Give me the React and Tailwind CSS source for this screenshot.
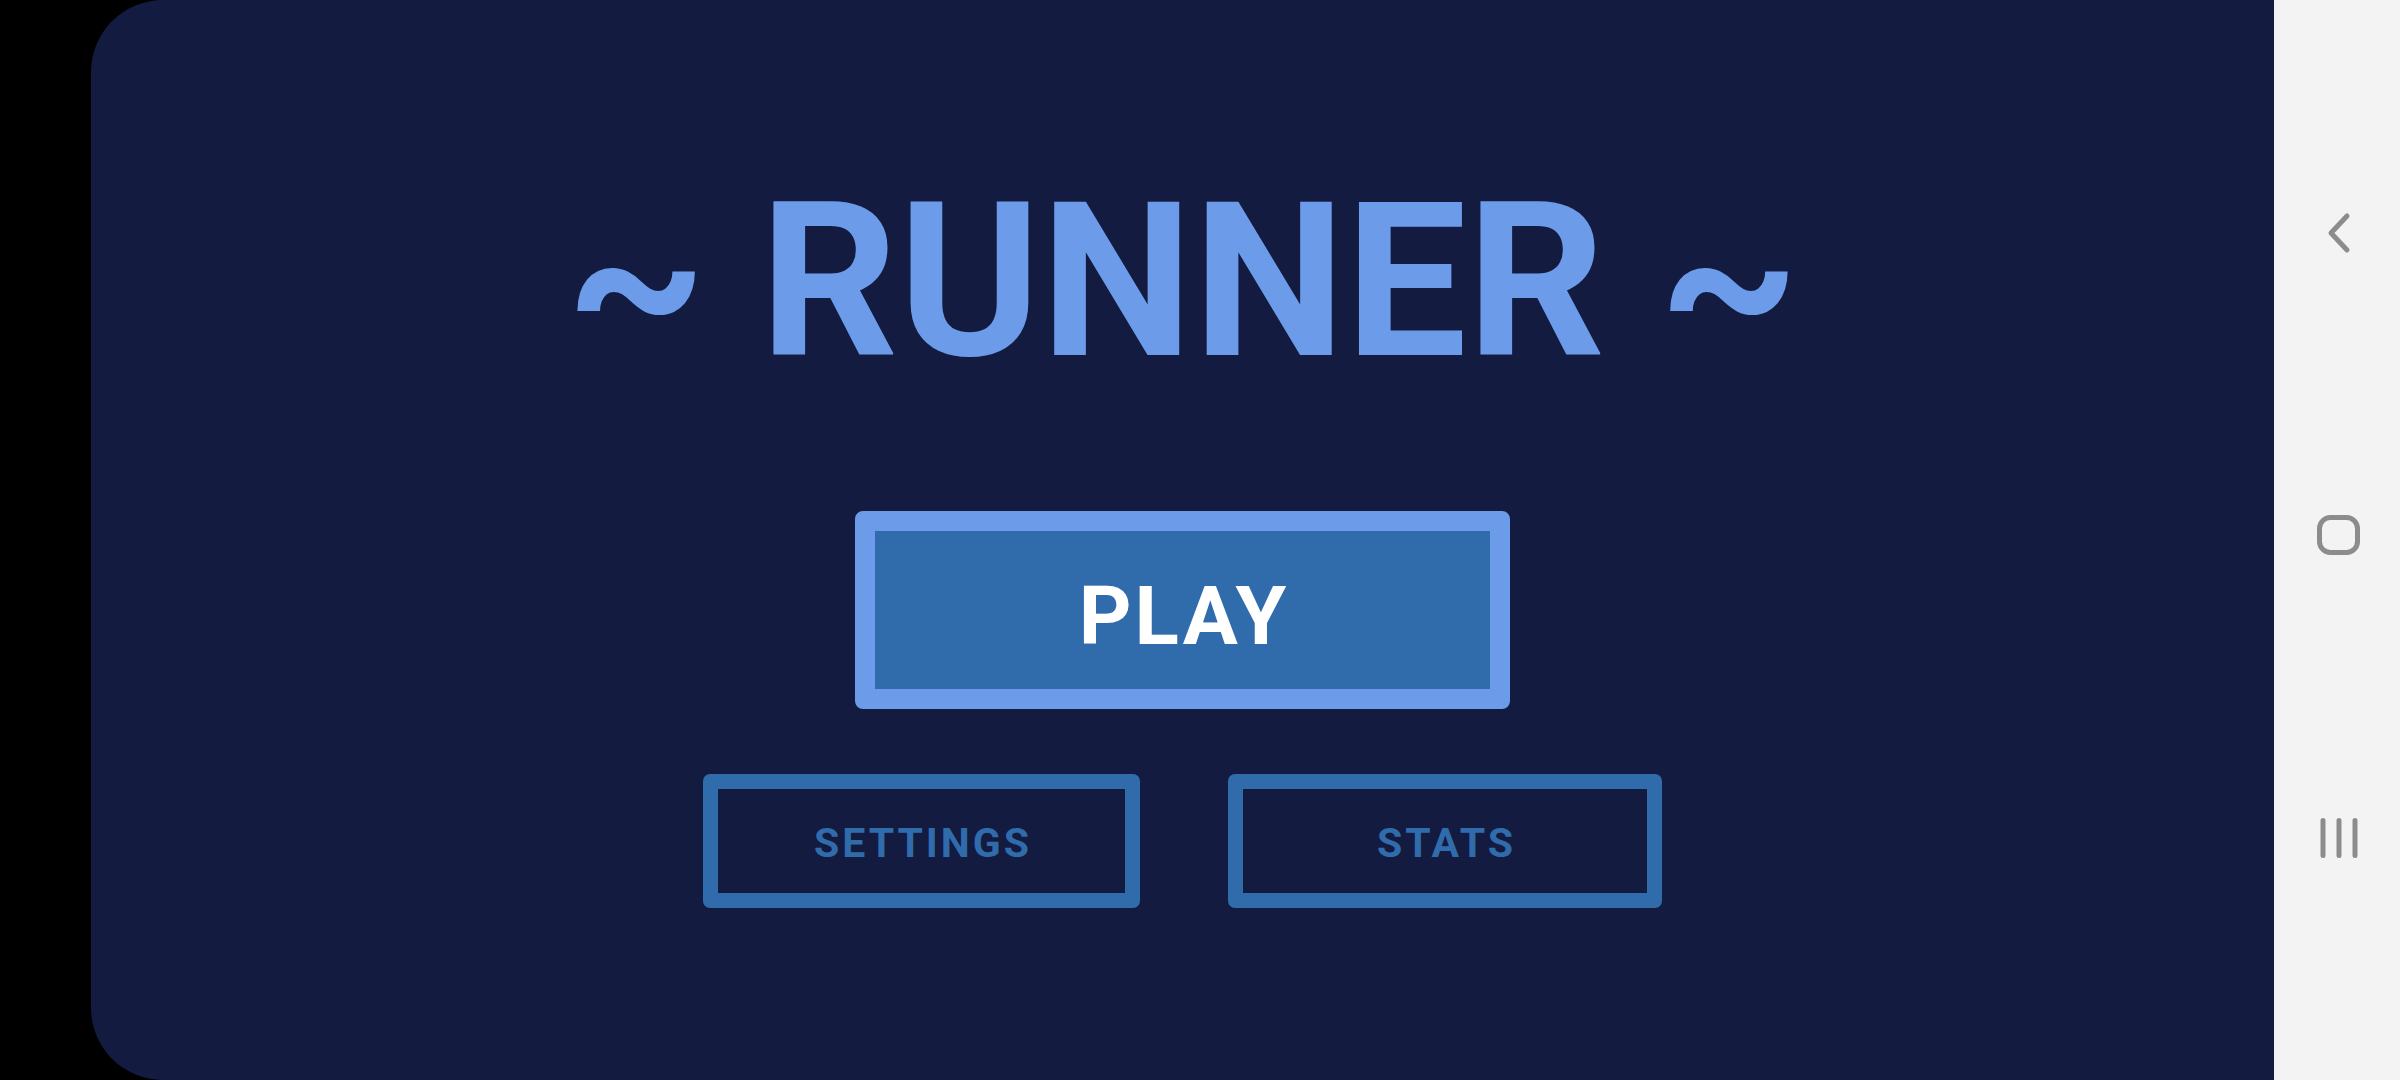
import React from "react";

function NavBar() {
  return (
    <div className="flex w-[126px] shrink-0 flex-col items-center bg-[#f3f3f3] pl-[3px]">
      <svg className="mt-[212px]" width="26" height="42" viewBox="0 0 26 42" fill="none">
        <path d="M21 4 L5 21 L21 38" stroke="#8c8c8c" strokeWidth="5" strokeLinecap="round" strokeLinejoin="round" />
      </svg>
      <svg className="mt-[261px]" width="43" height="40" viewBox="0 0 43 40" fill="none">
        <rect x="2.5" y="2.5" width="38" height="35" rx="11" stroke="#8c8c8c" strokeWidth="5" />
      </svg>
      <svg className="mt-[262px]" width="42" height="42" viewBox="0 0 42 42" fill="none">
        <path d="M5 3.5 V38.5 M21 3.5 V38.5 M37 3.5 V38.5" stroke="#8c8c8c" strokeWidth="5" strokeLinecap="round" />
      </svg>
    </div>
  );
}

export default function App() {
  return (
    <div
      className="flex h-[1080px] w-[2400px] bg-black"
      style={{ fontFamily: "Roboto, 'Liberation Sans', sans-serif" }}
    >
      <div className="w-[91px] shrink-0 bg-black" />
      <div className="flex flex-1 flex-col items-center rounded-l-[72px] bg-[#131b41]">
        <div className="mt-[174px] whitespace-pre text-[216px] font-bold leading-none text-[#6c9ce9]">
          ~ RUNNER ~
        </div>
        <button className="mt-[121px] flex h-[198px] w-[655px] items-center justify-center rounded-[8px] border-[20px] border-[#6c9ce9] bg-[#306cab] pl-[3px] pt-[12px] text-[82px] font-bold leading-none tracking-[3px] text-white">
          PLAY
        </button>
        <div className="mt-[65px] flex gap-[88px]">
          <button className="flex h-[134px] w-[437px] items-center justify-center rounded-[7px] border-[15px] border-[#306cab] pl-[3px] pt-[5px] text-[41px] font-bold leading-none tracking-[3px] text-[#306cab]">
            SETTINGS
          </button>
          <button className="flex h-[134px] w-[434px] items-center justify-center rounded-[7px] border-[15px] border-[#306cab] pl-[3px] pt-[5px] text-[41px] font-bold leading-none tracking-[3px] text-[#306cab]">
            STATS
          </button>
        </div>
      </div>
      <NavBar />
    </div>
  );
}
